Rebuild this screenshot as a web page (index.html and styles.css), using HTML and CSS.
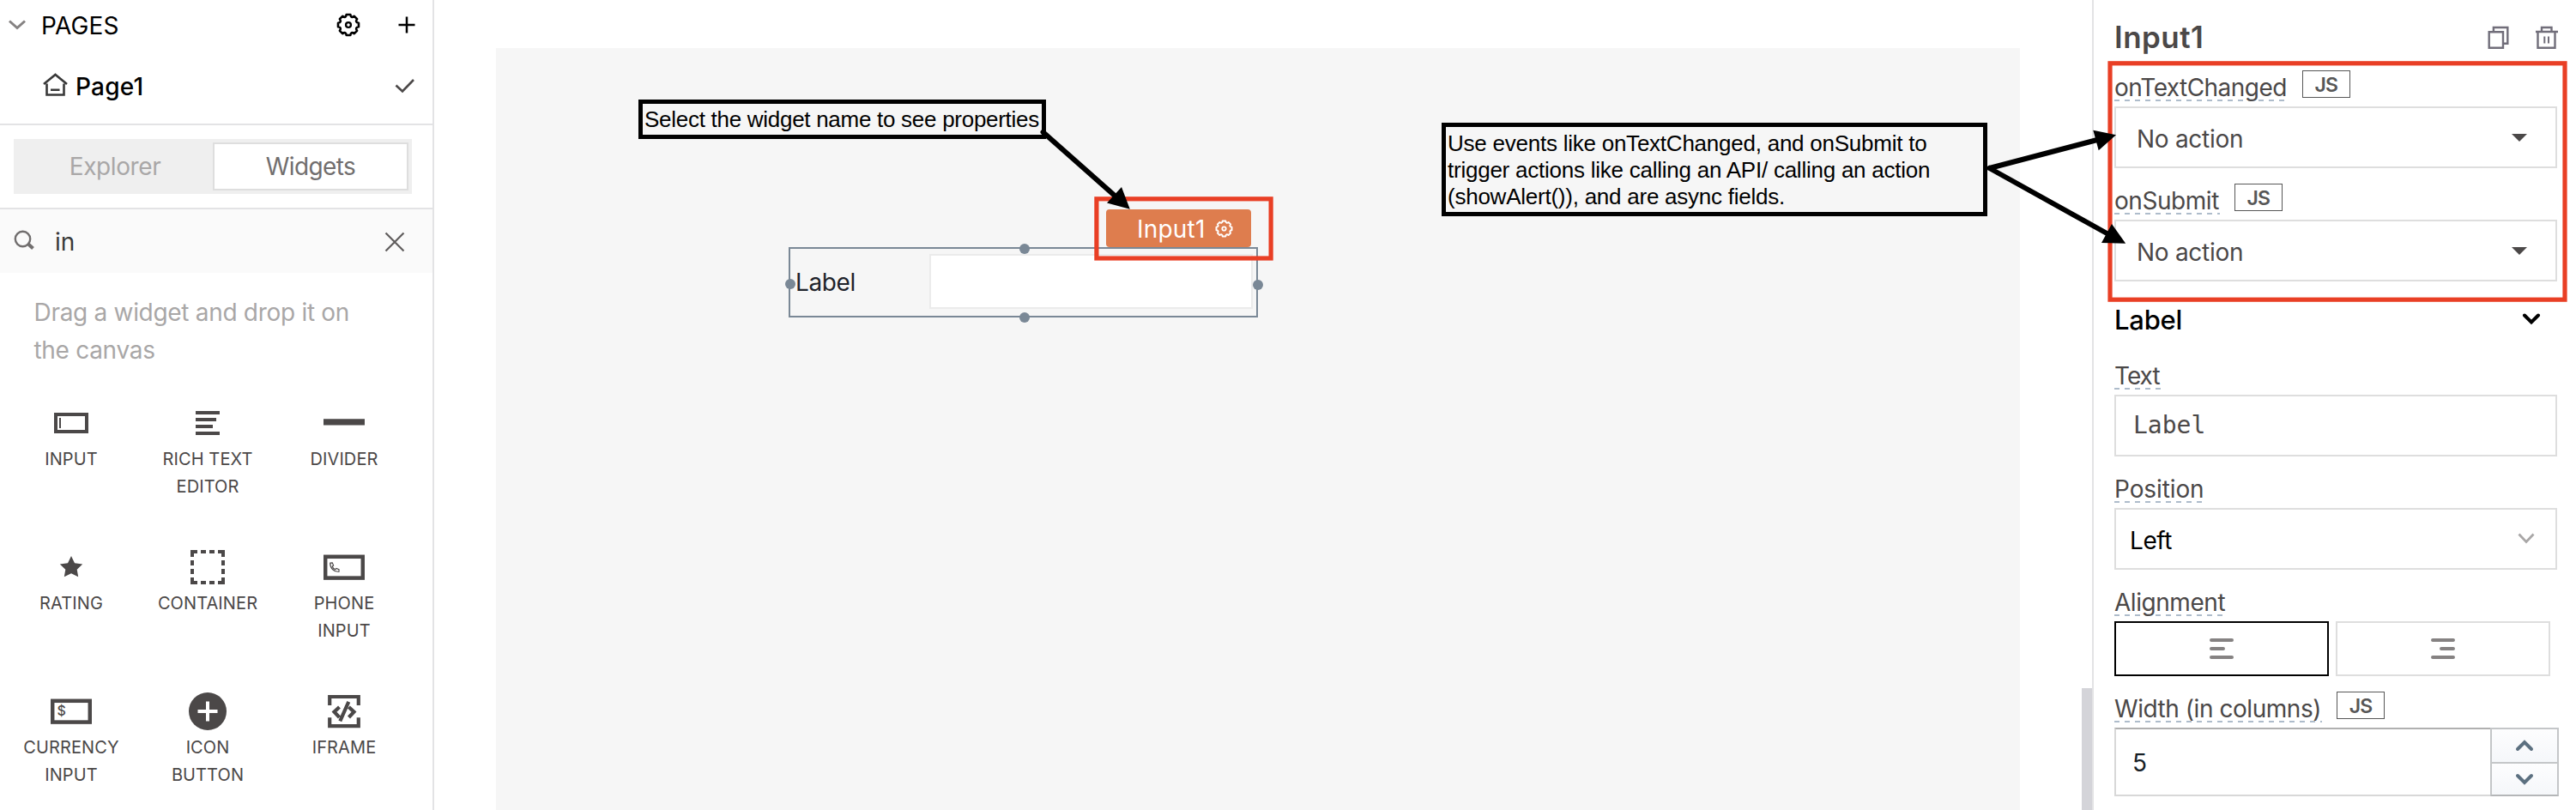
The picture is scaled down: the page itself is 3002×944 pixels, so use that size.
FILE: index.html
```
<!DOCTYPE html>
<html lang="en">
<head>
<meta charset="utf-8">
<title>Input1</title>
<link rel="stylesheet" href="styles.css">
</head>
<body>
<svg class="defs" width="0" height="0">
  <symbol id="gear" viewBox="-14 -14 28 28">
    <path fill="none" stroke="currentColor" stroke-width="2.6" stroke-linejoin="round" d="M-2.33-12L2.33-12Q3.06-7.4 6.82-10.11L10.11-6.82Q7.39-3.06 12-2.33L12 2.33Q7.39 3.06 10.11 6.82L6.82 10.11Q3.06 7.39 2.33 12L-2.33 12Q-3.06 7.39-6.82 10.11L-10.11 6.82Q-7.39 3.06-12 2.33L-12-2.33Q-7.39-3.06-10.11-6.82L-6.82-10.11Q-3.06-7.39-2.33-12Z"/>
    <circle r="2.9" fill="none" stroke="currentColor" stroke-width="2.4"/>
  </symbol>
</svg>
<div class="app">
  <aside class="explorer">
    <header class="pages-head">
      <svg class="pages-caret" width="22" height="14"><path d="M1 2.500L10 10.500L19 2.500" fill="none" stroke="#858282" stroke-width="3"/></svg>
      <span class="pages-title">PAGES</span>
      <svg class="pages-gear" width="28" height="28"><use href="#gear"/></svg>
      <svg class="pages-add" width="20" height="20"><path d="M10 .5V19.500M.5 10H19.500" stroke="#000" stroke-width="2.500"/></svg>
    </header>
    <div class="page-row">
      <svg class="home" width="30" height="28"><path d="M5.500 12.500V25.500H25.500V12.500M2 13L15.500 2L29 13M10 19.700H20.500" fill="none" stroke="#393939" stroke-width="2.600"/></svg>
      <span class="page-name">Page1</span>
      <svg class="check" width="24" height="18"><path d="M1.500 8.500L9 15.500L22 2" fill="none" stroke="#4b4848" stroke-width="2.600"/></svg>
    </div>
    <div class="tabs-wrap">
      <div class="tabs"><span class="tab">Explorer</span><span class="tab active">Widgets</span></div>
    </div>
    <div class="search">
      <svg class="lens" width="26" height="26"><circle cx="10.500" cy="10.500" r="8.700" fill="none" stroke="#716e6e" stroke-width="2.400"/><path d="M16.500 16L22.500 21.500" stroke="#716e6e" stroke-width="4"/></svg>
      <span class="query">in</span>
      <svg class="clear" width="24" height="24"><path d="M1.500 1.500L22.500 22.500M22.500 1.500L1.500 22.500" stroke="#5f5c5c" stroke-width="2.200"/></svg>
    </div>
    <p class="hint">Drag a widget and drop it on the canvas</p>
    <div class="widgets">
      <div class="widget"><svg width="48" height="48"><rect x="6" y="14" width="36" height="20" fill="none" stroke="#4b4848" stroke-width="4"/><rect x="10" y="18" width="2" height="12" fill="#4b4848"/></svg><span>INPUT</span></div>
      <div class="widget"><svg width="48" height="48" fill="#4b4848"><path d="M10 10h28v4H10zM10 18h24v4H10zM10 26h20v4H10zM10 34h28v4H10z"/></svg><span>RICH TEXT EDITOR</span></div>
      <div class="widget"><svg width="48" height="48" fill="#4b4848"><path d="M0 19.300h48v7.200H0z"/></svg><span>DIVIDER</span></div>
      <div class="widget"><svg width="48" height="48" fill="#4b4848"><path d="M24 11L28 19.300L37.200 20.600L30.700 26.800L32.200 35.300L24 31.300L15.800 35.300L17.300 26.800L10.800 20.600L20 19.300Z"/></svg><span>RATING</span></div>
      <div class="widget"><svg width="48" height="48" fill="#4b4848"><path d="M4 4h8v4H8v4H4zM16 4h6v4h-6zM26 4h6v4h-6zM36 4h8v8h-4V8h-4zM4 16h4v6H4zM4 26h4v6H4zM40 16h4v6h-4zM40 26h4v6h-4zM4 36h4v4h4v4H4zM16 40h6v4h-6zM26 40h6v4h-6zM40 36h4v8h-8v-4h4z"/></svg><span>CONTAINER</span></div>
      <div class="widget"><svg width="48" height="48" fill="none" stroke="#4b4848"><rect x="2.200" y="11.800" width="43.600" height="24.800" stroke-width="4.500"/><path d="M7.800 19.200L10.300 18.800L11.600 22L10.200 23.200Q11.400 26 13.800 26.600L15 25.500L18 26.600V29.200Q13.500 29.600 10.500 26.500Q7.500 23.500 7.800 19.200Z" stroke-width="1.200"/></svg><span>PHONE INPUT</span></div>
      <div class="widget"><svg width="48" height="48"><rect x="2.200" y="11.800" width="43.600" height="24.800" stroke-width="4.500" fill="none" stroke="#4b4848"/><text class="dollar" x="7.500" y="29">$</text></svg><span>CURRENCY INPUT</span></div>
      <div class="widget"><svg width="48" height="48"><circle cx="24" cy="24" r="22" fill="#4b4848"/><path d="M24 12.500V35.500M12.500 24H35.500" stroke="#fff" stroke-width="4"/></svg><span>ICON BUTTON</span></div>
      <div class="widget"><svg width="48" height="48" fill="none" stroke="#4b4848" stroke-width="4.200"><path d="M7.200 17V7H40.800V17M7.200 31.300V41.200H40.800V31.300M18.500 19L12.500 24.600L18.500 31M29.500 19L35.500 24.600L29.500 31M29.300 12.800L19.300 35.400" /></svg><span>IFRAME</span></div>
    </div>
  </aside>

  <main class="stage">
    <div class="canvas">
      <div class="note note-name">Select the widget name to see properties</div>
      <div class="note note-events">Use events like onTextChanged, and onSubmit to<br>trigger actions like calling an API/ calling an action<br>(showAlert()), and are async fields.</div>
      <div class="selection">
        <span class="sel-label">Label</span>
        <span class="sel-input"></span>
        <i class="handle top"></i><i class="handle right"></i><i class="handle bottom"></i><i class="handle left"></i>
      </div>
      <div class="tag"><span>Input1</span><svg width="21" height="21"><use href="#gear"/></svg></div>
    </div>
    <i class="scrollbar"></i>
  </main>

  <aside class="props">
    <header class="props-head">
      <h1>Input1</h1>
      <svg width="25" height="28" fill="none" stroke="#716e7a" stroke-width="2.400"><path d="M1.700 7.200H18V25.800H1.700ZM6.900 7V2H23.300V20.800H18.500"/></svg>
      <svg width="28" height="28" fill="none" stroke="#716e7a" stroke-width="2.400"><path d="M1 7H27M3.500 7V25.800H23.500V7M8 7V2H19.500V7"/><path d="M11.300 12.500V20.500M16 12.500V20.500" stroke-width="2"/></svg>
    </header>
    <section class="group">
      <div class="label-row"><label class="l-text">onTextChanged</label><span class="js">JS</span></div>
      <div class="field action"><span>No action</span><svg width="18" height="9"><path d="M0 0H18L9 9Z" fill="#4b4848"/></svg></div>
    </section>
    <section class="group">
      <div class="label-row"><label>onSubmit</label><span class="js">JS</span></div>
      <div class="field action"><span>No action</span><svg width="18" height="9"><path d="M0 0H18L9 9Z" fill="#4b4848"/></svg></div>
    </section>
    <div class="section-head"><span>Label</span><svg width="22" height="14"><path d="M3 2.500L11 10.500L19 2.500" fill="none" stroke="#000" stroke-width="4" stroke-linecap="round"/></svg></div>
    <section class="group">
      <div class="label-row"><label class="l-short">Text</label></div>
      <div class="field mono"><span>Label</span></div>
    </section>
    <section class="group">
      <div class="label-row"><label class="l-wide">Position</label></div>
      <div class="field select"><span>Left</span><svg width="20" height="14"><path d="M1.500 1.500L10 10.500L18.500 1.500" fill="none" stroke="#a9a7a7" stroke-width="2.800"/></svg></div>
    </section>
    <section class="group align">
      <div class="label-row"><label>Alignment</label></div>
      <div class="align-row">
        <span class="align-btn on"><svg width="28" height="24" stroke="#858282" stroke-width="4" stroke-linecap="round"><path d="M2 2H26M2 12H16M2 22H26"/></svg></span>
        <span class="align-btn"><svg width="28" height="24" stroke="#858282" stroke-width="4" stroke-linecap="round"><path d="M2 2H26M12 12H26M2 22H26"/></svg></span>
      </div>
    </section>
    <section class="group">
      <div class="label-row"><label>Width (in columns)</label><span class="js">JS</span></div>
      <div class="number">
        <span class="number-value">5</span>
        <span class="stepper">
          <i><svg width="22" height="14"><path d="M3 11L11 3L19 11" fill="none" stroke="#5c7080" stroke-width="4" stroke-linecap="round"/></svg></i>
          <i><svg width="22" height="14"><path d="M3 3L11 11L19 3" fill="none" stroke="#5c7080" stroke-width="4" stroke-linecap="round"/></svg></i>
        </span>
      </div>
    </section>
  </aside>
</div>
<svg class="annotations" width="3002" height="944" fill="none">
  <g stroke="#e93f25" stroke-width="5.200">
    <rect x="1277.900" y="231.800" width="203.200" height="69.200"/>
    <rect x="2459" y="73.800" width="530" height="275.400"/>
  </g>
  <g stroke="#000" stroke-width="6" stroke-linecap="round">
    <path d="M1215.500 154L1303 231.500M2318.500 196L2444 163M2318.500 196L2458 273.500"/>
  </g>
  <path fill="#000" d="M1316.800 243.700L1307 218L1290 236.500ZM2466 157.300L2439.300 151.700L2445.700 175.200ZM2477.200 283.700L2461 261L2449 283Z"/>
</svg>
</body>
</html>
```
FILE: styles.css
```
* { box-sizing: border-box; }
body { margin: 0; background: #fff; font-family: Inter, sans-serif; font-size: 28px; color: #4b4848; overflow: hidden; }
svg { display: block; flex: none; }
i { font-style: normal; }
.defs { position: absolute; }
.app { display: flex; width: 3002px; height: 944px; overflow: hidden; }

/* Left panel */
.explorer { width: 506px; flex: none; border-right: 2px solid #e3e3e5; }
.pages-head { display: flex; align-items: center; height: 58px; padding: 0 20px 0 10px; color: #000; }
.pages-title { margin: 0 auto 0 16px; line-height: 34px; padding-top: 1px; letter-spacing: .15px; }
.pages-gear { margin: -1px 44px 0 0; }
.pages-head .pages-add { margin-top: -1px; }
.page-row { display: flex; align-items: center; height: 88px; padding: 0 20px 2px 49px; border-bottom: 2px solid #e3e3e5; }
.home { margin-top: -3px; }
.page-name { margin: 0 auto 0 9px; padding-top: 2px; font-weight: 500; color: #000; letter-spacing: .22px; line-height: 34px; }
.check { margin-top: -1px; }
.tabs-wrap { padding: 16px 24px 16px 16px; border-bottom: 2px solid #e3e3e5; }
.tabs { display: flex; height: 64px; padding: 4px 4px 4px 0; background: #efefef; }
.tab { width: 232px; padding-left: 4px; line-height: 56px; text-align: center; color: #a9a7a7; letter-spacing: -.4px; }
.tab.active { width: 228px; padding: 0; background: #fff; border: 2px solid #dedede; line-height: 53px; color: #716e6e; letter-spacing: -.6px; }
.search { display: flex; align-items: center; height: 74px; padding: 0 32px 0 16px; background: #fafafa; }
.query { margin: 2px auto 0 22px; color: #393939; }
.search .clear { margin: 2px 0 0; }
.hint { width: 390px; margin: 24px 0 39px 39.5px; line-height: 44px; color: #a9a7a7; letter-spacing: -.3px; }
.widgets { display: grid; grid-template-columns: repeat(3, 159px); grid-auto-rows: 168px; margin-left: 3.5px; }
.widget { display: flex; flex-direction: column; align-items: center; gap: 2px; }
.widget svg { margin-left: -1px; }
.widget span { width: 122px; text-align: center; font-size: 20px; line-height: 32px; letter-spacing: .1px; }
.dollar { font-size: 16px; font-weight: 500; fill: #4b4848; }

/* Canvas */
.stage { position: relative; flex: 1; padding: 56px 84px 0 72px; }
.canvas { position: relative; height: 888px; background: #f6f6f6; }
.scrollbar { position: absolute; right: 0; top: 802px; width: 12px; height: 142px; background: #d4d4d9; }
.note { position: absolute; border: 5px solid #000; font: 26px "Liberation Sans", Arial, sans-serif; color: #000; white-space: nowrap; }
.note-name { left: 166px; top: 60px; width: 475px; height: 46px; padding: 0 2px; line-height: 37px; letter-spacing: -.28px; }
.note-events { left: 1102px; top: 87px; width: 636px; height: 109px; padding: 4px 0 0 2px; line-height: 31px; letter-spacing: -.24px; }
.selection { position: absolute; left: 341px; top: 232px; width: 547px; height: 82px; border: 2px solid #7a8896; display: flex; padding: 6px 4px 8px 6px; }
.sel-label { width: 156px; line-height: 66px; color: #1f232b; letter-spacing: -.38px; }
.sel-input { flex: 1; height: 64px; background: #fff; border: 2px solid #ebebeb; }
.handle { position: absolute; width: 12px; height: 12px; border-radius: 50%; background: #7a8896; }
.handle.top { left: 267px; top: -6px; }
.handle.bottom { left: 267px; bottom: -8px; }
.handle.left { left: -6px; top: 35px; }
.handle.right { right: -8px; top: 36px; }
.tag { position: absolute; left: 711px; top: 188px; width: 169px; height: 44px; border-radius: 4px; background: #de7d4e; color: #fff; display: flex; align-items: center; justify-content: flex-end; padding: 0 21.5px 0 0; gap: 11px; letter-spacing: .2px; }
.tag span { padding-top: 1px; }

/* Property pane */
.props { width: 564px; flex: none; border-left: 2px solid #e3e3e5; padding: 0 20px 0 24px; }
.props-head { display: flex; align-items: center; height: 82px; padding: 5px 0 0 0; }
.props-head svg { margin: 0 0 0 30px; }
h1 { margin: 0 auto 0 0; font-size: 35px; line-height: 42px; font-weight: 600; letter-spacing: .45px; }
.props-head h1 { padding-bottom: 1px; }
.group { height: 132px; padding-right: 2px; }
.label-row { display: flex; height: 42px; gap: 17px; }
label { height: 30px; margin-top: 6px; line-height: 29px; white-space: nowrap; letter-spacing: -.45px; padding-right: 1px; background: repeating-linear-gradient(90deg, #aebccb 0 6px, transparent 6px 12px) 0 100% / 100% 2px no-repeat; }
.l-text { letter-spacing: -.55px; }
.l-short { letter-spacing: -1px; }
.l-wide { letter-spacing: -.1px; }
.js { width: 56px; height: 32px; border: 1px solid #575757; font-size: 23px; font-weight: 600; line-height: 32px; text-align: center; color: #575757; letter-spacing: -.8px; }
.field { display: flex; align-items: center; justify-content: space-between; height: 72px; border: 2px solid #dedede; }
.action { padding: 0 33px 0 24px; letter-spacing: -.28px; }
.action span { padding-top: 3px; }
.mono { padding-left: 20px; font-family: "DejaVu Sans Mono", monospace; }
.mono span { padding-bottom: 2px; }
.select { padding: 0 24px 0 16px; color: #000; letter-spacing: -.4px; }
.select span { padding-top: 3px; }
.section-head { display: flex; align-items: center; justify-content: space-between; height: 72px; padding: 0 21px 20px 0; font-size: 31px; font-weight: 500; color: #000; letter-spacing: -.25px; }
.group.align { height: 124px; }
.align-row { display: flex; gap: 8px; }
.align-btn { width: 250px; height: 64px; border: 2px solid #dedede; display: flex; align-items: center; justify-content: center; }
.align-btn.on { border-color: #000; }
.number { display: flex; width: 518px; height: 80px; }
.number-value { flex: 1; border: 2px solid #d8d8d8; border-width: 2px 0 2px 2px; border-top-color: #b0b0b0; padding-left: 19px; line-height: 78px; color: #182026; }
.stepper { width: 80px; display: grid; grid-template-rows: 1fr 1fr; border: 2px solid #c4c6c8; border-bottom-color: #b4b6b8; }
.stepper i { display: flex; align-items: center; justify-content: center; background: linear-gradient(#fdfdfe, #f5f7fa); }
.stepper i + i { border-top: 2px solid #c4c6c8; }

.annotations { position: absolute; left: 0; top: 0; pointer-events: none; }
```
